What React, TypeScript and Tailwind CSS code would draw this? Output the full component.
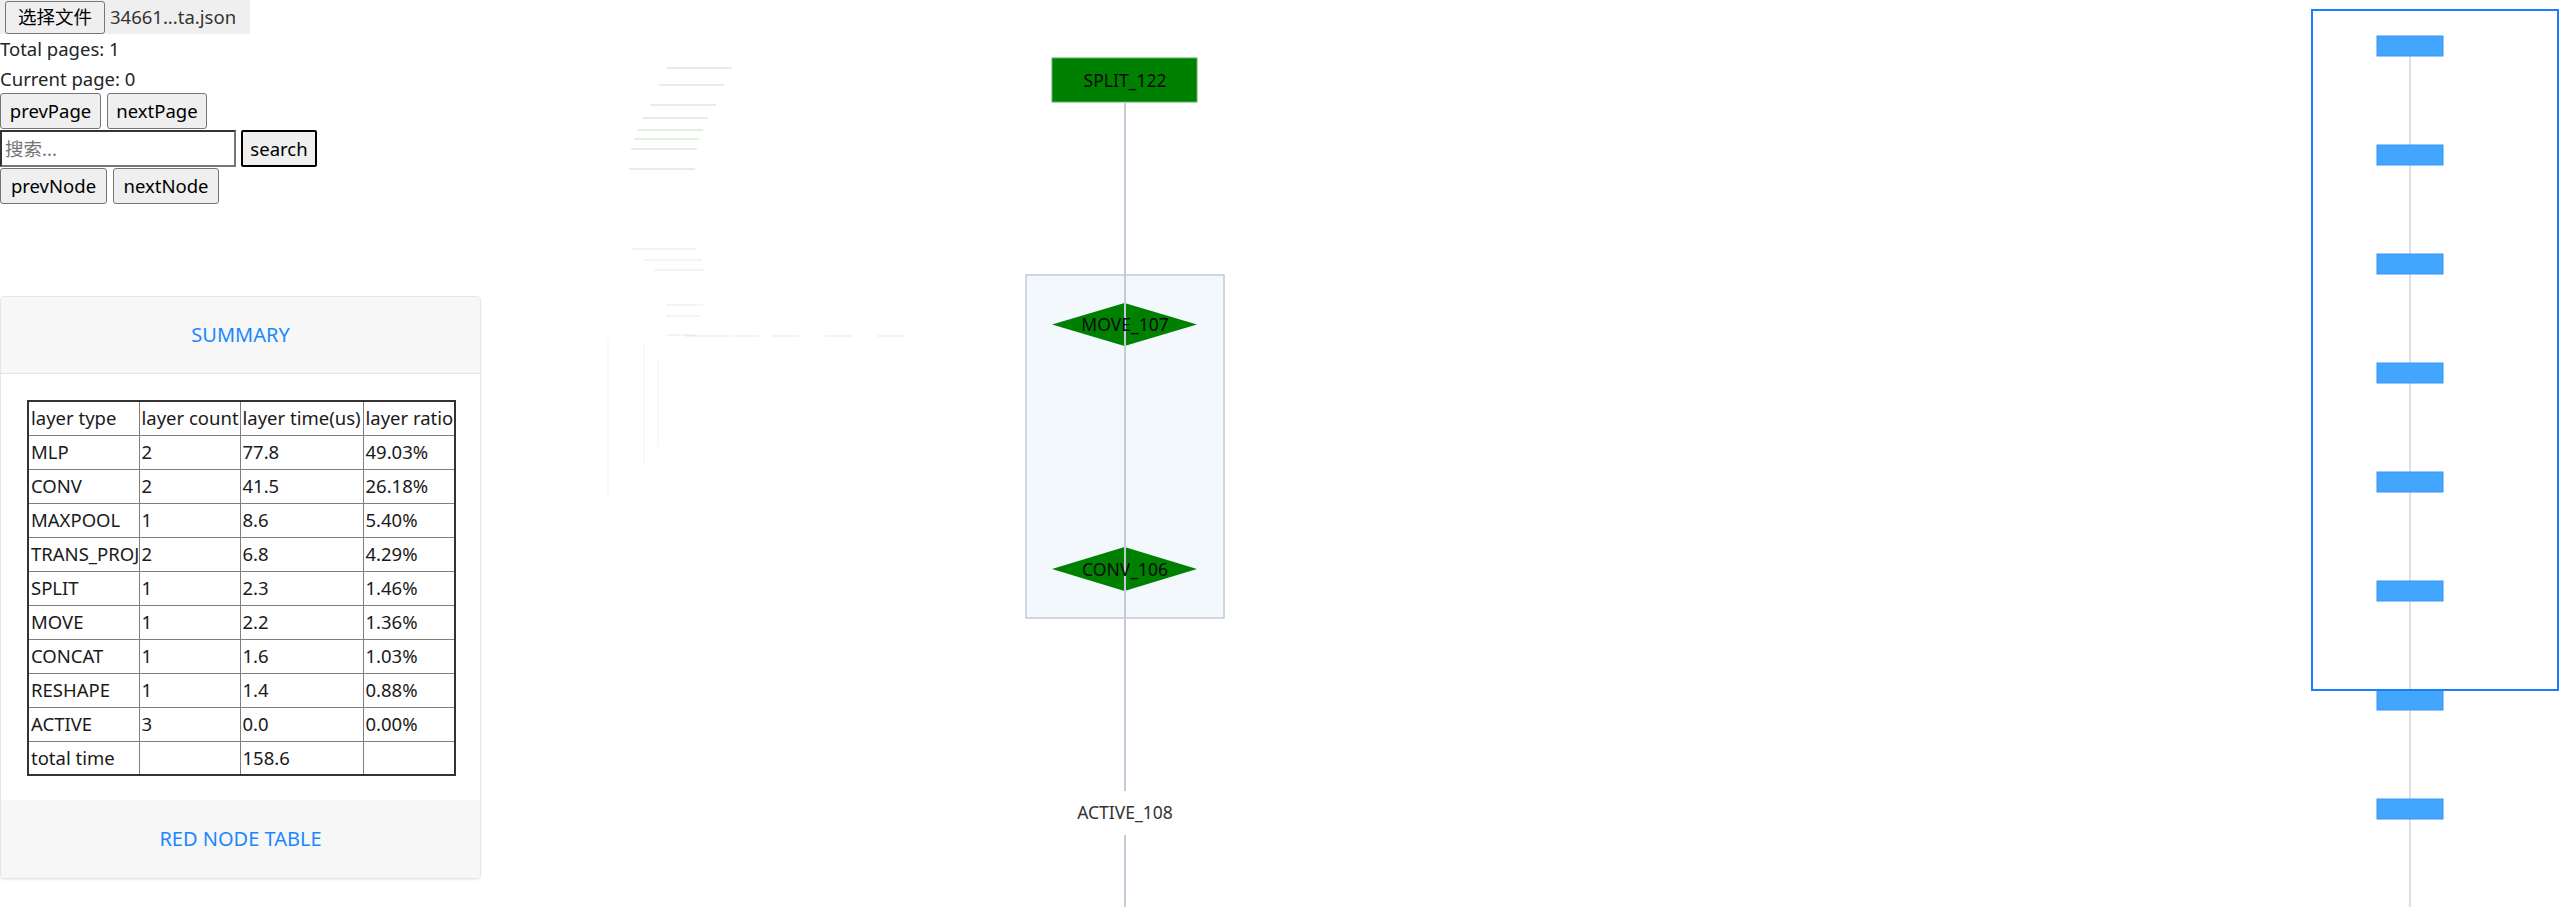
import React from "react";

const rows: [string, string, string, string][] = [
    ["MLP", "2", "77.8", "49.03%"],
    ["CONV", "2", "41.5", "26.18%"],
    ["MAXPOOL", "1", "8.6", "5.40%"],
    ["TRANS_PROJ", "2", "6.8", "4.29%"],
    ["SPLIT", "1", "2.3", "1.46%"],
    ["MOVE", "1", "2.2", "1.36%"],
    ["CONCAT", "1", "1.6", "1.03%"],
    ["RESHAPE", "1", "1.4", "0.88%"],
    ["ACTIVE", "3", "0.0", "0.00%"],
    ["total time", "", "158.6", ""],
];

// faint green traces on the left of the graph
const traces = [
    [667, 732, 68], [659, 724, 85], [650, 716, 105], [643, 708, 118],
    [638, 703, 130], [634, 699, 139], [631, 697, 149], [629, 695, 169],
];
const fadedTraces = [
    [632, 697, 249], [644, 702, 260], [654, 705, 270], [666, 703, 305],
    [666, 700, 316], [667, 695, 335], [685, 729, 336], [732, 759, 336],
    [772, 799, 336], [825, 853, 336], [877, 905, 336],
];

const btn = "h-[36px] rounded-[3px] border border-[#767676] bg-[#efefef] text-black";
const cell = "h-[34px] border border-[#7f7f7f] pl-[2px] text-left font-normal whitespace-nowrap overflow-hidden";

function Controls() {
    return (
        <div className="text-[18.5px] text-[#212529]">
            <div className="flex h-[34px] w-[250px] items-center bg-[#efefef]">
                <button type="button" className="ml-[5px] h-[33px] w-[100px] rounded-[3px] border border-[#767676] bg-[#efefef] text-black">
                    选择文件
                </button>
                <span className="ml-[5px] text-[#333]">34661...ta.json</span>
            </div>
            <div className="leading-[30px]">Total pages: 1</div>
            <div className="leading-[29px]">Current page: 0</div>
            <div className="flex gap-[6px]">
                <button type="button" className={`${btn} w-[101px]`}>prevPage</button>
                <button type="button" className={`${btn} w-[100px]`}>nextPage</button>
            </div>
            <div className="mt-px flex gap-[5px]">
                <input
                    placeholder="搜索..."
                    className="h-[37px] w-[236px] border-2 border-[#333] border-r-[#767676] border-b-[#767676] bg-white px-[3px] text-[18.5px] placeholder:text-[#757575]"
                />
                <button type="button" className="h-[37px] w-[76px] rounded-[2px] border-2 border-black bg-[#efefef] text-black">
                    search
                </button>
            </div>
            <div className="mt-px flex gap-[6px]">
                <button type="button" className={`${btn} w-[107px]`}>prevNode</button>
                <button type="button" className={`${btn} w-[106px]`}>nextNode</button>
            </div>
        </div>
    );
}

function SummaryCard() {
    return (
        <div className="mt-[92px] w-[481px] overflow-hidden rounded-[4px] border border-[#e6e6e6] shadow-[0_1px_2px_rgba(0,0,0,0.08)]">
            <div className="flex h-[77px] items-center justify-center border-b border-[#e3e3e3] bg-[#f7f7f7] text-[20px] text-[#1a88ff]">
                SUMMARY
            </div>
            <div className="bg-white px-[26px] pt-[26px] pb-[24px]">
                <table className="w-[427px] table-fixed border-collapse border-2 border-[#333] text-[18.5px] text-[#1a1a1a]">
                    <colgroup>
                        <col className="w-[111px]" />
                        <col className="w-[101px]" />
                        <col className="w-[123px]" />
                        <col className="w-[92px]" />
                    </colgroup>
                    <thead>
                        <tr>
                            <th className={cell}>layer type</th>
                            <th className={cell}>layer count</th>
                            <th className={cell}>layer time(us)</th>
                            <th className={cell}>layer ratio</th>
                        </tr>
                    </thead>
                    <tbody>
                        {rows.map((r) => (
                            <tr key={r[0]}>
                                {r.map((v, i) => (
                                    <td key={i} className={cell}>{v}</td>
                                ))}
                            </tr>
                        ))}
                    </tbody>
                </table>
            </div>
            <div className="flex h-[78px] items-center justify-center bg-[#f7f7f7] text-[20px] text-[#1a88ff]">
                RED NODE TABLE
            </div>
        </div>
    );
}

function Graph() {
    const font = "'Noto Sans', sans-serif";
    const minimap = [0, 1, 2, 3, 4, 5, 6, 7].map((i) => 46 + i * 109);
    return (
        <svg width={2079} height={907} viewBox="481 0 2079 907" className="block shrink-0">
            {traces.map(([a, b, y], i) => (
                <line key={`t${i}`} x1={a} x2={b} y1={y} y2={y} stroke="#008000" strokeOpacity={0.16} strokeWidth={1.5} />
            ))}
            {fadedTraces.map(([a, b, y], i) => (
                <line key={`f${i}`} x1={a} x2={b} y1={y} y2={y} stroke="#008000" strokeOpacity={0.08} strokeWidth={1.5} />
            ))}
            <line x1={608} x2={608} y1={338} y2={500} stroke="#000" strokeOpacity={0.05} />
            <line x1={644} x2={644} y1={345} y2={463} stroke="#000" strokeOpacity={0.06} />
            <line x1={658} x2={658} y1={360} y2={447} stroke="#000" strokeOpacity={0.04} />

            {/* main graph */}
            <rect x={1026} y={275} width={198} height={343} fill="#f3f8fd" stroke="#c3cad8" strokeWidth={1.5} />
            <rect x={1052} y={58} width={145} height={44} fill="#008000" stroke="#5fae5f" strokeWidth={1} />
            <polygon points="1052,324.5 1124.5,303 1197,324.5 1124.5,346" fill="#008000" />
            <polygon points="1052,569 1124.5,547 1197,569 1124.5,591" fill="#008000" />
            <line x1={1125} x2={1125} y1={102} y2={791} stroke="#c5cad8" strokeWidth={2} />
            <line x1={1125} x2={1125} y1={835} y2={907} stroke="#c5cad8" strokeWidth={2} />
            <g fontFamily={font} fontSize={17.5} textAnchor="middle" dominantBaseline="central">
                <text x={1125} y={80} fill="#0a0a0a">SPLIT_122</text>
                <text x={1125} y={324} fill="#0a0a0a">MOVE_107</text>
                <text x={1125} y={569} fill="#0a0a0a">CONV_106</text>
                <text x={1125} y={812} fill="#333">ACTIVE_108</text>
            </g>

            {/* minimap */}
            <line x1={2410} x2={2410} y1={56} y2={907} stroke="#dde0e9" strokeWidth={2} />
            {minimap.map((cy) => (
                <rect key={cy} x={2377} y={cy - 10} width={66} height={20} fill="#42a6ff" stroke="#3b95f2" strokeWidth={1} />
            ))}
            <rect x={2312} y={10} width={246} height={680} fill="none" stroke="#1a7dff" strokeWidth={2} />
        </svg>
    );
}

export default function App() {
    return (
        <div className="flex h-[907px] w-[2560px] overflow-hidden bg-white font-['Noto_Sans','Noto_Sans_CJK_SC',sans-serif]">
            <div className="w-[481px] shrink-0">
                <Controls />
                <SummaryCard />
            </div>
            <Graph />
        </div>
    );
}
